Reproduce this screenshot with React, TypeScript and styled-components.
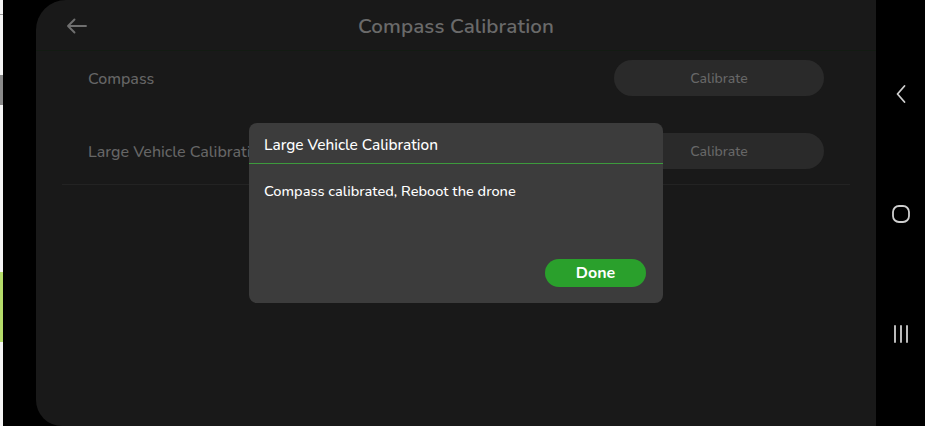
import React from "react";
import styled, { createGlobalStyle } from "styled-components";

const Global = createGlobalStyle`
  html, body { margin: 0; padding: 0; background: #000; }
  body { font-family: "Nunito", "Lato", "Noto Sans", sans-serif; overflow: hidden; }
  * { box-sizing: border-box; }
`;

const Screen = styled.div`
  display: flex;
  width: 925px;
  height: 426px;
  background: #000;
`;

const DesktopStrip = styled.div`
  width: 3px;
  height: 100%;
  background: #f4f4f4;
  display: flex;
  flex-direction: column;
`;

const StripBlock = styled.div<{ $h: number; $c: string }>`
  height: ${(p) => p.$h}px;
  background: ${(p) => p.$c};
  flex-shrink: 0;
`;

const Device = styled.div`
  flex: 1;
  display: flex;
  background: #000;
  border-radius: 0 0 0 7px;
  padding-left: 33px;
`;

const Panel = styled.div`
  position: relative;
  width: 840px;
  height: 426px;
  background: #191919;
  border-radius: 30px 0 0 26px;
  display: flex;
  flex-direction: column;
  overflow: hidden;
`;

const Header = styled.div`
  height: 51px;
  display: grid;
  grid-template-columns: 80px 1fr 80px;
  align-items: center;
  border-bottom: 1px solid #131b13;
  padding-top: 2px;
`;

const BackButton = styled.div`
  display: flex;
  align-items: center;
  padding-left: 30px;
  color: #6f6f6f;
`;

const Title = styled.div`
  text-align: center;
  font-size: 20.6px;
  font-weight: 600;
  color: #6a6a6a;
  letter-spacing: 0.1px;
`;

const List = styled.div`
  margin: 0 26px;
  padding: 9px 0 15px;
  display: flex;
  flex-direction: column;
  gap: 37px;
  border-bottom: 1px solid #232323;
`;

const Row = styled.div`
  display: flex;
  align-items: center;
  justify-content: space-between;
  height: 36px;
  padding: 0 26px;
`;

const RowLabel = styled.div`
  font-size: 16px;
  color: #666;
  font-weight: 500;
  padding-top: 2px;
`;

const CalibrateButton = styled.div`
  width: 210px;
  height: 36px;
  border-radius: 18px;
  background: #2a2a2a;
  color: #676767;
  font-size: 14px;
  font-weight: 500;
  display: flex;
  align-items: center;
  justify-content: center;
`;

const Overlay = styled.div`
  position: absolute;
  inset: 0;
  display: flex;
  align-items: center;
  justify-content: center;
`;

const Dialog = styled.div`
  width: 414px;
  height: 180px;
  background: #3c3c3c;
  border-radius: 8px;
  display: flex;
  flex-direction: column;
`;

const DialogHeader = styled.div`
  height: 40px;
  display: flex;
  align-items: center;
  padding: 3px 15px 0;
  color: #fff;
  font-size: 15.4px;
  font-weight: 500;
`;

const DialogDivider = styled.div`
  height: 1px;
  background: #3d9a3d;
  flex-shrink: 0;
`;

const DialogBody = styled.div`
  flex: 1;
  padding: 17px 15px 0;
  color: #fff;
  font-size: 14.6px;
  font-weight: 500;
`;

const DialogFooter = styled.div`
  display: flex;
  justify-content: flex-end;
  padding: 0 17px 16px;
`;

const DoneButton = styled.div`
  width: 101px;
  height: 28px;
  border-radius: 14px;
  background: #2aa02c;
  color: #fff;
  font-size: 16px;
  font-weight: 700;
  display: flex;
  align-items: center;
  justify-content: center;
`;

const NavBar = styled.div`
  flex: 1;
  display: flex;
  flex-direction: column;
  align-items: center;
  padding-top: 82px;
  gap: 96px;
  color: #cfcfcf;
`;

const NavIcon = styled.div`
  width: 24px;
  height: 24px;
  display: flex;
  align-items: center;
  justify-content: center;
`;

export default function App() {
  return (
    <>
      <Global />
      <Screen>
        <DesktopStrip>
          <StripBlock $h={14} $c="#f4f4f4" />
          <StripBlock $h={1} $c="#9a9a9a" />
          <StripBlock $h={60} $c="#f4f4f4" />
          <StripBlock $h={30} $c="#8a8a8a" />
          <StripBlock $h={167} $c="#f4f4f4" />
          <StripBlock $h={70} $c="#b5dc6a" />
          <StripBlock $h={84} $c="#f4f4f4" />
        </DesktopStrip>
        <Device>
          <Panel>
            <Header>
              <BackButton>
                <svg width="21" height="16" viewBox="0 0 21 16" fill="none">
                  <path
                    d="M20 8H2M8.5 1.5L2 8l6.5 6.5"
                    stroke="currentColor"
                    strokeWidth="1.9"
                    strokeLinecap="round"
                    strokeLinejoin="round"
                  />
                </svg>
              </BackButton>
              <Title>Compass Calibration</Title>
              <div />
            </Header>
            <List>
              <Row>
                <RowLabel>Compass</RowLabel>
                <CalibrateButton>Calibrate</CalibrateButton>
              </Row>
              <Row>
                <RowLabel>Large Vehicle Calibration</RowLabel>
                <CalibrateButton>Calibrate</CalibrateButton>
              </Row>
            </List>
            <Overlay>
              <Dialog>
                <DialogHeader>Large Vehicle Calibration</DialogHeader>
                <DialogDivider />
                <DialogBody>Compass calibrated, Reboot the drone</DialogBody>
                <DialogFooter>
                  <DoneButton>Done</DoneButton>
                </DialogFooter>
              </Dialog>
            </Overlay>
          </Panel>
          <NavBar>
            <NavIcon>
              <svg width="12" height="20" viewBox="0 0 12 20" fill="none">
                <path d="M9.5 2L2.5 10l7 8" stroke="currentColor" strokeWidth="1.8" strokeLinecap="round" strokeLinejoin="round" />
              </svg>
            </NavIcon>
            <NavIcon>
              <svg width="20" height="20" viewBox="0 0 20 20" fill="none">
                <rect x="2" y="2" width="16" height="16" rx="6" stroke="currentColor" strokeWidth="1.8" />
              </svg>
            </NavIcon>
            <NavIcon>
              <svg width="18" height="20" viewBox="0 0 18 20" fill="none">
                <path d="M3 2v16M9 2v16M15 2v16" stroke="currentColor" strokeWidth="1.8" strokeLinecap="round" />
              </svg>
            </NavIcon>
          </NavBar>
        </Device>
      </Screen>
    </>
  );
}
